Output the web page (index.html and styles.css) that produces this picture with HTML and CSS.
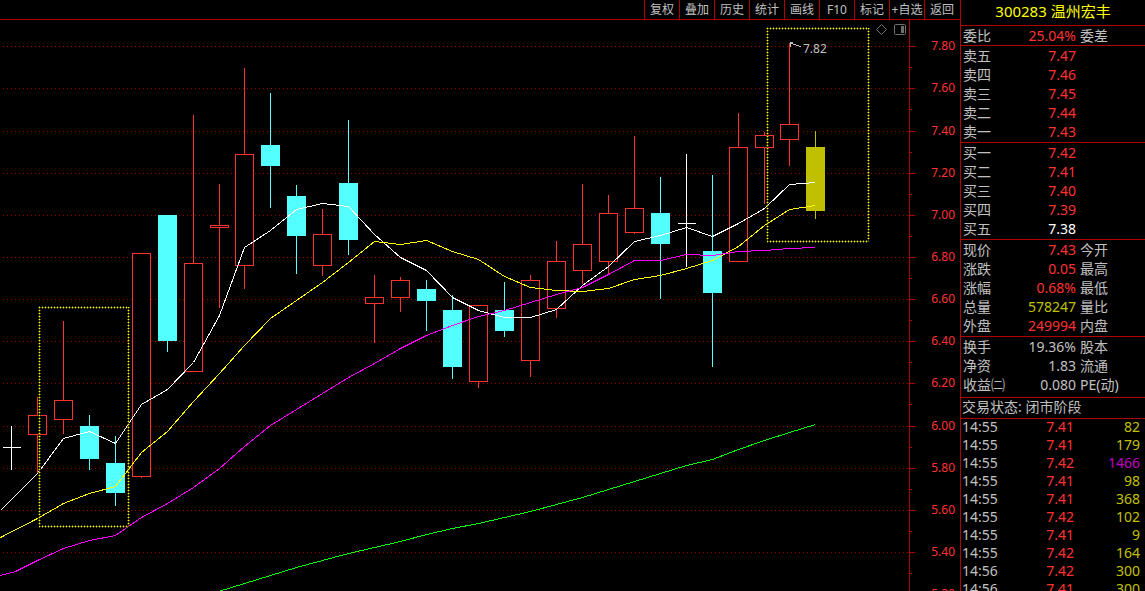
FILE: index.html
```html
<!DOCTYPE html>
<html lang="zh-CN">
<head>
<meta charset="utf-8">
<title>300283 温州宏丰</title>
<link rel="stylesheet" href="styles.css">
</head>
<body>
<div class="app">
  <main class="main">
    <nav class="toolbar">
      <button type="button">复权</button>
      <button type="button">叠加</button>
      <button type="button">历史</button>
      <button type="button">统计</button>
      <button type="button">画线</button>
      <button type="button">F10</button>
      <button type="button">标记</button>
      <button type="button">+自选</button>
      <button type="button">返回</button>
    </nav>
    <section class="chart">
      <svg id="plot" class="plot" viewBox="0 20 960 571" preserveAspectRatio="xMaxYMin slice" role="img" aria-label="日K线"></svg>
      <div class="tools">
        <button type="button" aria-label="标记点"><svg width="12" height="12" viewBox="0 0 12 12"><path d="M5.5 .5L10.500 5.500L5.500 10.500L.5 5.500Z"/></svg></button>
        <button type="button" aria-label="侧栏"><svg width="12" height="12" viewBox="0 0 12 12"><rect x=".5" y=".5" width="11" height="10" rx="1"/><rect class="solid" x="7" y="2" width="3" height="7"/></svg></button>
      </div>
    </section>
  </main>
  <aside class="side">
    <h1>300283 温州宏丰</h1>
    <table class="quote">
      <tbody class="single"><tr><th>委比</th><td class="up">25.04%</td><th>委差</th></tr></tbody>
    </table>
    <table class="quote padded">
      <tbody>
        <tr><th>卖五</th><td class="up">7.47</td><th></th></tr>
        <tr><th>卖四</th><td class="up">7.46</td><th></th></tr>
        <tr><th>卖三</th><td class="up">7.45</td><th></th></tr>
        <tr><th>卖二</th><td class="up">7.44</td><th></th></tr>
        <tr><th>卖一</th><td class="up">7.43</td><th></th></tr>
      </tbody>
    </table>
    <table class="quote padded">
      <tbody>
        <tr><th>买一</th><td class="up">7.42</td><th></th></tr>
        <tr><th>买二</th><td class="up">7.41</td><th></th></tr>
        <tr><th>买三</th><td class="up">7.40</td><th></th></tr>
        <tr><th>买四</th><td class="up">7.39</td><th></th></tr>
        <tr><th>买五</th><td class="flat">7.38</td><th></th></tr>
      </tbody>
    </table>
    <table class="quote padded">
      <tbody>
        <tr><th>现价</th><td class="up">7.43</td><th>今开</th></tr>
        <tr><th>涨跌</th><td class="up">0.05</td><th>最高</th></tr>
        <tr><th>涨幅</th><td class="up">0.68%</td><th>最低</th></tr>
        <tr><th>总量</th><td class="vol">578247</td><th>量比</th></tr>
        <tr><th>外盘</th><td class="up">249994</td><th>内盘</th></tr>
      </tbody>
    </table>
    <table class="quote padded last">
      <tbody>
        <tr><th>换手</th><td>19.36%</td><th>股本</th></tr>
        <tr><th>净资</th><td>1.83</td><th>流通</th></tr>
        <tr><th>收益㈡</th><td>0.080</td><th>PE(动)</th></tr>
      </tbody>
    </table>
    <p class="status">交易状态: 闭市阶段</p>
    <div class="ticks">
      <table>
        <tbody>
          <tr><th>14:55</th><td class="up">7.41</td><td class="vol">82</td></tr>
          <tr><th>14:55</th><td class="up">7.41</td><td class="vol">179</td></tr>
          <tr><th>14:55</th><td class="up">7.42</td><td class="big">1466</td></tr>
          <tr><th>14:55</th><td class="up">7.41</td><td class="vol">98</td></tr>
          <tr><th>14:55</th><td class="up">7.41</td><td class="vol">368</td></tr>
          <tr><th>14:55</th><td class="up">7.42</td><td class="vol">102</td></tr>
          <tr><th>14:55</th><td class="up">7.41</td><td class="vol">9</td></tr>
          <tr><th>14:55</th><td class="up">7.42</td><td class="vol">164</td></tr>
          <tr><th>14:56</th><td class="up">7.42</td><td class="vol">300</td></tr>
          <tr><th>14:56</th><td class="up">7.41</td><td class="vol">300</td></tr>
        </tbody>
      </table>
    </div>
  </aside>
</div>
<script src="chart.js"></script>
</body>
</html>
```
FILE: styles.css
```css
* { box-sizing: border-box; }

body {
  margin: 0;
  background: #000;
  color: #c0c0c0;
  font: 14px/19px "Noto Sans", "Noto Sans CJK SC", sans-serif;
}

button {
  margin: 0;
  padding: 0;
  border: 0;
  background: none;
  color: inherit;
  font: inherit;
  cursor: pointer;
}

.app { display: flex; height: 100vh; overflow: hidden; }
.main { flex: 1; min-width: 0; display: flex; flex-direction: column; }

.toolbar {
  display: flex;
  justify-content: flex-end;
  padding-right: 1px;
  border-bottom: 1px solid #b00000;
  font-size: 12px;
}
.toolbar button {
  width: 35px;
  height: 19px;
  line-height: 17px;
  border-left: 1px solid #b00000;
  white-space: nowrap;
}

.chart { position: relative; flex: 1; min-height: 0; }
.plot { display: block; width: 100%; height: 100%; }
.tools { position: absolute; top: 4px; right: 54px; display: flex; gap: 6px; }
.tools svg { display: block; fill: none; stroke: #707070; }
.tools .solid { fill: #707070; stroke: none; }

.grid { stroke: #a00000; stroke-dasharray: 1 3; }
.axis { stroke: #b00000; fill: none; }
.label { fill: #ff3232; font-size: 12px; text-anchor: end; }
.note { fill: #c0c0c0; font-size: 12px; }
.pointer { fill: none; stroke: #c0c0c0; }
.rise { fill: #000; stroke: #ff3232; }
.fall { fill: #54ffff; stroke: #54ffff; }
.even { fill: none; stroke: #fff; }
.mark { fill: #c0c000; stroke: #c0c000; }
.line { fill: none; }
.ma5 { stroke: #fff; }
.ma10 { stroke: #ff0; }
.ma20 { stroke: #f0f; }
.ma60 { stroke: #0f0; }
.halo { fill: none; stroke: #606000; stroke-width: 3; stroke-dasharray: 1 2; }
.core { fill: none; stroke: #505000; }
.dots { fill: none; stroke: #ff0; stroke-dasharray: 1 2; }

.side {
  width: 185px;
  display: flex;
  flex-direction: column;
  border-left: 1px solid #b00000;
}
.side > * { flex: none; border-bottom: 1px solid #b00000; }
h1 {
  margin: 0;
  height: 26px;
  font-size: 15px;
  font-weight: 400;
  line-height: 23px;
  text-align: center;
  color: #ff0;
}
table { width: 100%; border-collapse: separate; border-spacing: 0; table-layout: fixed; }
th, td { padding: 0; font-weight: 400; white-space: nowrap; }
th { text-align: left; }
td { text-align: right; }
.quote tr { height: 19px; }
.quote th { padding-left: 2px; }
.quote th:first-child { width: 50px; }
.quote td { width: 65px; }
.quote th:last-child { padding-left: 4px; }
.padded { padding-bottom: 1px; }
.last { padding-bottom: 3px; }
.status { margin: 0; padding-left: 1px; height: 21px; line-height: 17px; }
.side .ticks { flex: 1; min-height: 0; overflow: hidden; border-bottom: 0; line-height: 16px; }
.ticks tr { height: 18px; vertical-align: top; }
.ticks th { width: 50px; padding-left: 1px; }
.ticks td:nth-child(2) { width: 63px; }
.ticks td:last-child { padding-right: 5px; }
.up { color: #ff3232; }
.flat { color: #fff; }
.vol { color: #c0c000; }
.big { color: #c000c0; }
```
FILE: chart.js
```js
const plot = document.getElementById("plot");

function add(name, cls, attrs, text) {
  const node = document.createElementNS("http://www.w3.org/2000/svg", name);
  node.setAttribute("class", cls);
  for (const key in attrs) node.setAttribute(key, attrs[key]);
  if (text) node.textContent = text;
  plot.appendChild(node);
}

function path(cls, d) {
  add("path", cls, { d: d, "shape-rendering": "crispEdges" });
}

// Price grid: one row for each 0.20
const rows = [46, 88, 131, 173, 215, 257, 299, 341, 383, 426, 468, 510, 552, 594];
rows.forEach((y, i) => {
  path("grid", `M3 ${y + 0.5}H909`);
  path("axis", `M909 ${y + 0.5}H915M909 ${y + 21.5}H912`);
  add("text", "label", { x: 955, y: y + 4 }, (7.8 - i * 0.2).toFixed(2));
});
path("axis", "M909.5 20V600");

// kind, centre x, high, body top, body bottom, low
const candles = [
  ["even", 11, 426, 447, 447, 470],
  ["rise", 37, 397, 415, 434, 473],
  ["rise", 63, 321, 400, 419, 434],
  ["fall", 89, 415, 426, 458, 470],
  ["fall", 115, 436, 463, 492, 506],
  ["rise", 141, 253, 253, 476, 478],
  ["fall", 167, 215, 215, 340, 352],
  ["rise", 193, 115, 263, 371, 371],
  ["rise", 219, 184, 225, 227, 308],
  ["rise", 244, 68, 154, 265, 289],
  ["fall", 270, 93, 145, 165, 208],
  ["fall", 296, 185, 196, 235, 274],
  ["rise", 322, 209, 234, 265, 276],
  ["fall", 348, 120, 183, 239, 255],
  ["rise", 374, 275, 297, 303, 343],
  ["rise", 400, 277, 280, 297, 312],
  ["fall", 426, 280, 289, 300, 331],
  ["fall", 452, 295, 310, 366, 379],
  ["rise", 478, 305, 305, 381, 388],
  ["fall", 504, 282, 310, 330, 337],
  ["rise", 530, 275, 280, 360, 377],
  ["rise", 556, 241, 261, 308, 318],
  ["rise", 582, 184, 244, 270, 284],
  ["rise", 608, 195, 213, 261, 274],
  ["rise", 634, 136, 208, 232, 234],
  ["fall", 660, 177, 213, 243, 299],
  ["even", 686, 154, 223, 223, 267],
  ["fall", 712, 175, 251, 292, 367],
  ["rise", 738, 113, 147, 261, 261],
  ["rise", 764, 132, 135, 147, 204],
  ["rise", 789, 43, 124, 139, 166],
  ["mark", 815, 131, 147, 210, 219]
];
for (const [kind, x, high, top, bottom, low] of candles) {
  const c = x + 0.5;
  path(kind, `M${c} ${high}V${top}M${c} ${bottom}V${low}`);
  path(kind, `M${c - 9} ${top + 0.5}H${c + 9}V${bottom + 0.5}H${c - 9}Z`);
}

const averages = {
  ma5: "0,510 37,473 63,438 89,431 115,443 141,404 167,389 193,362 219,315 244,247 270,230 296,209 322,203 348,206 374,234 400,257 426,270 452,297 478,310 504,317 530,317 556,309 582,285 608,266 634,241 660,235 686,227 712,236 738,223 764,208 789,184 815,182",
  ma10: "0,537 37,518 63,503 89,493 115,486 141,452 167,431 193,401 219,373 244,345 270,318 296,300 322,282 348,262 374,241 400,244 426,240 452,251 478,259 504,276 530,287 556,290 582,291 608,288 634,279 660,275 686,268 712,260 738,246 764,225 789,209 815,205",
  ma20: "0,575 15,571 37,560 63,548 89,540 115,535 141,517 167,503 193,487 219,468 244,446 270,425 322,393 348,377 374,363 400,348 426,335 452,325 478,316 504,310 530,302 556,294 582,287 608,274 634,260 660,260 686,254 712,255 738,251 764,250 789,248 815,247",
  ma60: "218,591 244,583 270,575 296,567 348,553 374,547 400,541 426,534 452,528 478,523 504,517 530,511 556,504 582,497 608,489 634,481 660,473 686,465 712,459 738,449 764,440 789,432 815,424"
};
for (const name in averages) {
  add("polyline", "line " + name, {
    points: averages[name],
    transform: "translate(0.5 0.5)",
    "shape-rendering": "crispEdges"
  });
}

// Selected ranges
for (const [x, y, w, h] of [[39, 307, 90, 219], [767, 28, 102, 213]]) {
  const d = `M${x} ${y + 0.5}h${w}M${x} ${y + h + 0.5}h${w}M${x + 0.5} ${y}v${h}M${x + w - 0.5} ${y}v${h}`;
  path("halo", d);
  path("core", d);
  path("dots", d);
}

path("pointer", "M789.5 42.5H793M790.500 42.500V46.500M791 43.500L801 46.500");
add("text", "note", { x: 803, y: 53 }, "7.82");
```
